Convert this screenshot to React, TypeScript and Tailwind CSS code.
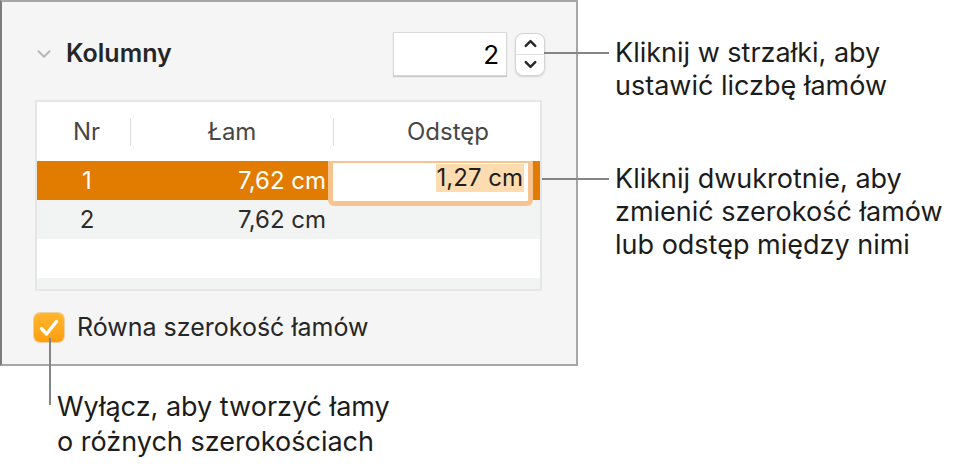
import { ChevronDown, ChevronUp } from 'lucide-react';

const rows = [
    { nr: '1', width: '7,62 cm', gap: '1,27 cm', selected: true },
    { nr: '2', width: '7,62 cm', gap: '', selected: false },
];

function Stepper() {
    return (
        <div className="flex h-[43px] w-[30px] flex-col overflow-hidden rounded-[8px] border border-[#d4d4d4] bg-white shadow-[0_1px_2px_rgba(0,0,0,0.15)]">
            <div className="flex flex-1 items-center justify-center border-b border-[#e2e2e2]">
                <ChevronUp size={19} strokeWidth={3.2} className="text-[#2a2a2a]" />
            </div>
            <div className="flex flex-1 items-center justify-center">
                <ChevronDown size={19} strokeWidth={3.2} className="text-[#2a2a2a]" />
            </div>
        </div>
    );
}

export default function App() {
    return (
        <div className="relative h-[467px] w-[964px] overflow-hidden bg-white font-['Inter',sans-serif] text-[#1c1c1c]">
            <div className="flex">
                <section className="h-[366px] w-[578px] shrink-0 border-2 border-[#a6a6a6] border-l-[#7c7c7c] bg-[#f5f5f5] pl-[31px] pr-[31px] pt-[30px]">
                    <div className="flex h-[44px] items-center">
                        <ChevronDown size={22} strokeWidth={2} className="text-[#b5b5b5]" />
                        <span className="ml-[11px] text-[25px] font-semibold text-[#262626]">Kolumny</span>
                        <div className="ml-auto flex h-[44px] w-[114px] items-center justify-end border border-[#d9d9d9] bg-white pr-[7px] text-[26px] text-black shadow-[0_1px_1px_rgba(0,0,0,0.18)]">
                            2
                        </div>
                        <div className="ml-[8px]">
                            <Stepper />
                        </div>
                    </div>

                    <div className="ml-[2px] mt-[24px] w-[507px] border-2 border-[#e6e6e6] bg-white">
                        <div className="grid h-[59px] grid-cols-[93px_203px_207px] items-center text-[24px] text-[#474747]">
                            <div className="flex justify-center pl-[6px]">Nr</div>
                            <div className="flex h-[28px] items-center justify-center border-l border-[#dedede]">Łam</div>
                            <div className="flex h-[28px] items-center justify-center border-l border-[#dedede] pl-[22px]">Odstęp</div>
                        </div>

                        {rows.map((row) => (
                            <div
                                key={row.nr}
                                className={
                                    row.selected
                                        ? 'grid h-[39px] grid-cols-[93px_203px_207px] items-center bg-[#e17c00] text-[24px] text-white'
                                        : 'grid h-[39px] grid-cols-[93px_203px_207px] items-center bg-[#f2f3f3] text-[24px] text-[#2b2b2b]'
                                }
                            >
                                <div className="flex justify-center pl-[7px]">{row.nr}</div>
                                <div className="flex justify-end pr-[7px]">{row.width}</div>
                                <div className="relative h-full">
                                    {row.selected ? (
                                        <div className="absolute left-[-5px] top-0 z-10 h-[45px] w-[205px] rounded-b-[6px] border-[5px] border-t-2 border-[#f7c48f] bg-white">
                                            <div className="flex h-full items-start justify-end pr-[4px] pt-[1px]">
                                                <span className="bg-[#fedcb0] px-[1px] leading-[28px] text-[#1f1f1f]">{row.gap}</span>
                                            </div>
                                        </div>
                                    ) : null}
                                </div>
                            </div>
                        ))}

                        <div className="h-[39px] bg-white" />
                        <div className="h-[11px] bg-[#f2f3f3]" />
                    </div>

                    <div className="mt-[18px] flex items-center gap-[13px] pl-[1px]">
                        <div className="flex h-[29px] w-[30px] items-center justify-center rounded-[6px] bg-gradient-to-b from-[#ffb62e] to-[#ff9e0b] shadow-[0_0_0_1px_rgba(230,140,0,0.35)]">
                            <svg width="22" height="20" viewBox="0 0 22 20" fill="none">
                                <path
                                    d="M3.5 10.5 L8.5 16 L18.5 3.5"
                                    stroke="white"
                                    strokeWidth="3.4"
                                    strokeLinecap="round"
                                    strokeLinejoin="round"
                                />
                            </svg>
                        </div>
                        <span className="text-[25px] text-[#262626]">Równa szerokość łamów</span>
                    </div>
                </section>

                <div className="pl-[37px] pt-[36px] text-[27px] leading-[33px]">
                    <p>
                        Kliknij w strzałki, aby
                        <br />
                        ustawić liczbę łamów
                    </p>
                    <p className="mt-[60px]">
                        Kliknij dwukrotnie, aby
                        <br />
                        zmienić szerokość łamów
                        <br />
                        lub odstęp między nimi
                    </p>
                </div>
            </div>

            <p className="pl-[57px] pt-[23px] text-[27px] leading-[35px]">
                Wyłącz, aby tworzyć łamy
                <br />o różnych szerokościach
            </p>

            <div className="absolute left-[544px] top-[52px] h-[2px] w-[65px] bg-[#858585]" />
            <div className="absolute left-[542px] top-[178px] h-[2px] w-[67px] bg-[#858585]" />
            <div className="absolute left-[49px] top-[338px] h-[67px] w-[2px] bg-[#858585]" />
        </div>
    );
}
